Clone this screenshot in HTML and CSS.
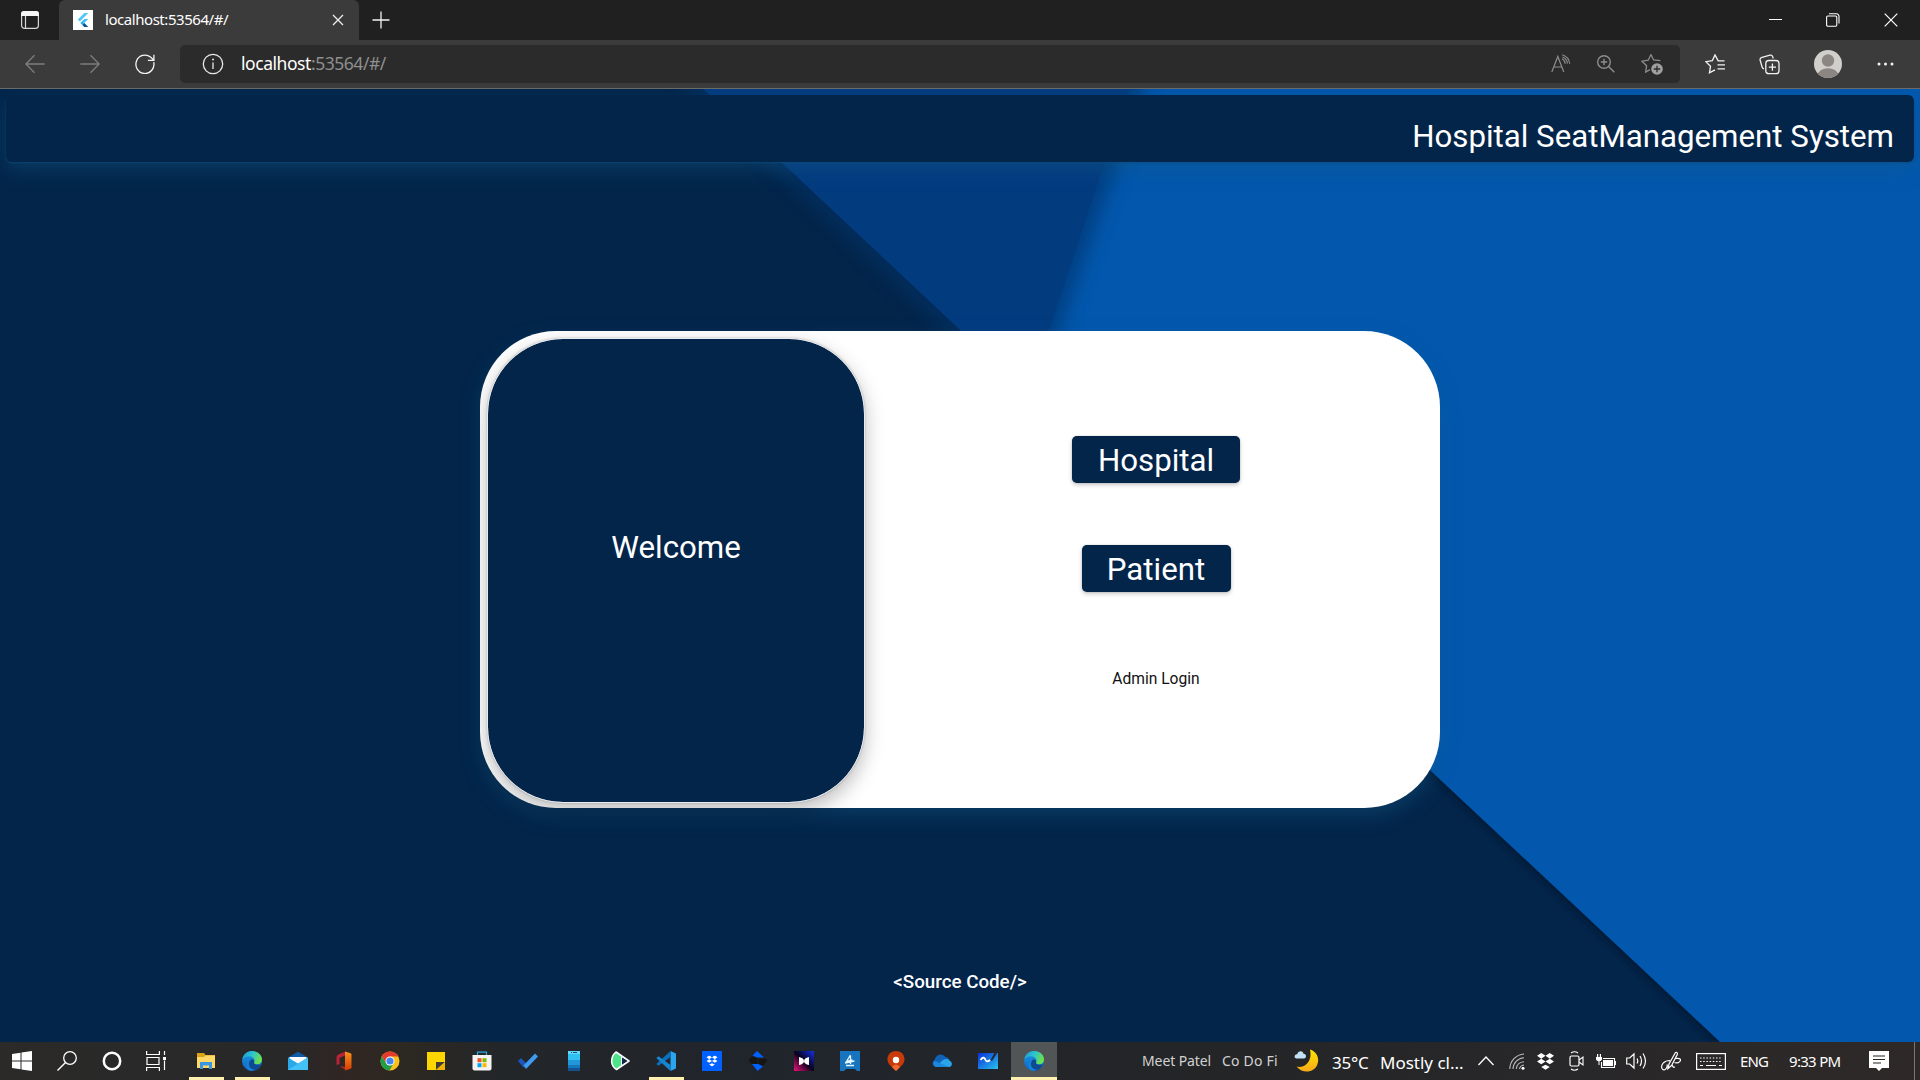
FILE: index.html
```
<!DOCTYPE html>
<html lang="en">
<head>
<meta charset="utf-8">
<title>localhost:53564/#/</title>
<link rel="stylesheet" href="styles.css">
</head>
<body>
<div class="tabstrip">
  <svg class="tab-menu" width="20" height="20" viewBox="0 0 20 20"><rect x="1.6" y="1.6" width="16.8" height="16.8" rx="2.8" fill="none" stroke="#d8d8d8" stroke-width="1.2"/><path d="M1 6V4a3 3 0 0 1 3-3h12a3 3 0 0 1 3 3v2z" fill="#f6f6f6"/><path d="M5.5 6v12" stroke="#d8d8d8" stroke-width="1.2"/></svg>
  <div class="tab">
    <svg width="20" height="20" viewBox="0 0 20 20"><rect width="20" height="20" fill="#fff"/><path d="M11.3 3h4L6.8 11.5 4.8 9.4z" fill="#54c5f8"/><path d="M11.3 9.1h4L11.2 13l-2-2z" fill="#45bdf5"/><path d="m7.3 13 2-2 2 2-2 2z" fill="#1fb2ee"/><path d="m9.3 15 2-2 4 4h-4z" fill="#01579b"/></svg>
    <span class="tab-title">localhost:53564/#/</span>
    <svg width="12" height="12" viewBox="0 0 12 12"><path d="m1 1 10 10M11 1 1 11" stroke="#eee" stroke-width="1.3"/></svg>
  </div>
  <svg class="new-tab" width="18" height="18" viewBox="0 0 18 18"><path d="M9 .5v17M.5 9h17" stroke="#f2f2f2" stroke-width="1.3"/></svg>
  <div class="window-controls">
    <svg width="13" height="14" viewBox="0 0 13 14"><path d="M0 6.500h13" stroke="#fff"/></svg>
    <svg width="14" height="14" viewBox="0 0 14 14"><rect x=".6" y="3" width="10.2" height="10.2" rx="1.2" fill="none" stroke="#fff" stroke-width="1.1"/><path d="M3 .8h7.5a2.5 2.5 0 0 1 2.5 2.5v7.2" fill="none" stroke="#fff" stroke-width="1.1"/></svg>
    <svg width="14" height="14" viewBox="0 0 14 14"><path d="m.7.7 12.6 12.6M13.3.7.7 13.3" stroke="#fff" stroke-width="1.2"/></svg>
  </div>
</div>

<div class="toolbar">
  <div class="nav">
    <svg width="20" height="20" viewBox="0 0 20 20"><path d="M19.700 10H1M9.500 1.300.9 10l8.600 8.700" fill="none" stroke="#7d7d7d" stroke-width="1.3"/></svg>
    <svg width="20" height="20" viewBox="0 0 20 20"><path d="M.3 10H19M10.500 1.300 19.100 10l-8.600 8.700" fill="none" stroke="#7d7d7d" stroke-width="1.3"/></svg>
    <svg width="20" height="20" viewBox="0 0 20 20"><path d="M18.700 8.200A9 9.200 0 1 1 15.500 3.100L18.600 6M18.900.8V6.400H12.900" fill="none" stroke="#f4f4f4" stroke-width="1.3"/></svg>
  </div>
  <div class="address">
    <svg width="22" height="22" viewBox="0 0 22 22"><circle cx="11" cy="11" r="9.700" fill="none" stroke="#e8e8e8" stroke-width="1.3"/><path d="M11 9.500v6.500" stroke="#e8e8e8" stroke-width="1.300"/><circle cx="11" cy="6.500" r="1" fill="#e8e8e8"/></svg>
    <span class="url"><b>localhost</b>:53564/#/</span>
    <div class="address-tools">
      <svg width="20" height="20" viewBox="0 0 20 20"><path d="M.8 18 6.800 2.500 12.800 18M2.800 13h8M11 4.800c2 1 3 2.600 3.200 5M11.200.8c4 1.200 7 4.500 7.500 9M11.500 3c3 1 4.500 3 5 6.500" fill="none" stroke="#8d8d8d" stroke-width="1.2"/></svg>
      <svg width="20" height="20" viewBox="0 0 20 20"><circle cx="8" cy="8" r="6.300" fill="none" stroke="#8d8d8d" stroke-width="1.400"/><path d="m12.500 12.500 5.800 5.800M8 4.800v6.400M4.800 8h6.400" stroke="#8d8d8d" stroke-width="1.400"/></svg>
      <svg width="22" height="22" viewBox="0 0 22 22"><path d="M10 1.500 12.600 7l6.800.7M9 16.600 4.700 19l.9-6.300L1 8.200l6.200-1L10 1.500" fill="none" stroke="#8d8d8d" stroke-width="1.300"/><circle cx="16" cy="16" r="5.800" fill="#a0a0a0"/><path d="M16 12.800v6.400M12.800 16h6.400" stroke="#2b2b2b" stroke-width="1.300"/></svg>
    </div>
  </div>
  <div class="tools">
    <svg width="20" height="20" viewBox="0 0 20 20"><path d="M19.500 6.900h-6.300L10 .9 7.300 6.700l-6.500 1 4.700 4.600-1 6.500 5.500-2.900M12.500 10.900h7.500M12.500 14.900h7.500" fill="none" stroke="#f2f2f2" stroke-width="1.350"/></svg>
    <svg width="21" height="21" viewBox="0 0 21 21"><rect x="6.800" y="6.500" width="13.200" height="13.200" rx="3" fill="none" stroke="#f2f2f2" stroke-width="1.300"/><path d="M13.400 9.500v7.200M9.800 13.100H17M14.200 4.500 13.700 2.600Q13 .7 11 1.200L3 3.400Q.7 4 1.100 6l2 7Q3.500 14.500 5 14.800" fill="none" stroke="#f2f2f2" stroke-width="1.300"/></svg>
    <svg width="28" height="28" viewBox="0 0 28 28"><clipPath id="face"><circle cx="14" cy="14" r="14"/></clipPath><g clip-path="url(#face)"><rect width="28" height="28" fill="#d1cfcc"/><circle cx="14" cy="10.500" r="6.200" fill="#8c8683"/><ellipse cx="14" cy="25.500" rx="10.300" ry="7.300" fill="#8c8683"/></g></svg>
    <svg width="17" height="4" viewBox="0 0 17 4"><g fill="#f2f2f2"><circle cx="2" cy="2" r="1.500"/><circle cx="8.500" cy="2" r="1.500"/><circle cx="15" cy="2" r="1.500"/></g></svg>
  </div>
</div>

<main class="page">
  <svg class="backdrop" width="1920" height="953" viewBox="0 0 1920 953">
    <defs>
      <filter id="soft" x="-10%" y="-10%" width="120%" height="120%"><feGaussianBlur stdDeviation="10"/></filter>
      <filter id="tight" x="-10%" y="-10%" width="120%" height="120%"><feGaussianBlur stdDeviation="3"/></filter>
      <clipPath id="navy"><path d="M0 0H703L1720 953H0z"/></clipPath>
    </defs>
    <rect width="1920" height="953" fill="#0358ae"/>
    <path d="M680-20H1150L1024 343 984 460z" fill="#033570" opacity=".72" filter="url(#soft)"/>
    <path d="M682-20H1136L970 477z" fill="#033b7f"/>
    <path d="M0 0H703L1720 953H0z" fill="#03254a"/>
    <g clip-path="url(#navy)">
      <path d="M682-20 990 269" stroke="#053c7c" stroke-width="12" opacity=".7" filter="url(#soft)"/>
      <path d="M1400 653 1741 973" stroke="#021429" stroke-width="6" opacity=".7" filter="url(#tight)"/>
    </g>
  </svg>
  <header class="banner">Hospital SeatManagement System</header>
  <section class="card">
    <div class="welcome">Welcome</div>
    <div class="choices">
      <button class="btn hospital">Hospital</button>
      <button class="btn patient">Patient</button>
      <a class="admin">Admin Login</a>
    </div>
  </section>
  <footer class="source">&lt;Source Code/&gt;</footer>
</main>

<div class="taskbar">
  <svg width="0" height="0" class="defs">
    <defs>
      <linearGradient id="eg" x1="0" y1="0" x2="1" y2=".4"><stop offset="0" stop-color="#1793d1"/><stop offset=".5" stop-color="#2bc3d2"/><stop offset="1" stop-color="#6be052"/></linearGradient>
      <linearGradient id="eb" x1="0" y1="0" x2="0" y2="1"><stop offset="0" stop-color="#1b9de2"/><stop offset="1" stop-color="#1160c4"/></linearGradient>
      <linearGradient id="of" x1="0" y1="0" x2="0" y2="1"><stop offset="0" stop-color="#f7941d"/><stop offset="1" stop-color="#d83b01"/></linearGradient>
      <linearGradient id="pk" x1="0" y1="1" x2="1" y2="0"><stop offset="0" stop-color="#f0127c"/><stop offset=".5" stop-color="#08021c"/><stop offset="1" stop-color="#1330e8"/></linearGradient>
      <linearGradient id="wb" x1="0" y1="0" x2="1" y2="1"><stop offset="0" stop-color="#0a2fd8"/><stop offset="1" stop-color="#28c4f0"/></linearGradient>
      <linearGradient id="mn" x1="0" y1="0" x2="0" y2="1"><stop offset="0" stop-color="#ffe600"/><stop offset="1" stop-color="#f8a918"/></linearGradient>
      <symbol id="edge" viewBox="0 0 20 20"><circle cx="10" cy="10" r="10" fill="url(#eb)"/><path d="M.3 8.500C1.200 3.500 5 0 10 0c6 0 10 4 10 8.400 0 3.200-2.400 4.800-5 4.800-2 0-3.300-.8-3-1.800.5-1 .7-1.600.5-2.500C12 6.800 9.800 5.300 7 5.300 4 5.300 1.500 6.600.3 8.500z" fill="url(#eg)"/><path d="M12 11.400c-.3 1.200 1.500 2.400 3.600 2.400 1.400 0 2.600-.4 3.500-.9C17.500 17 14 19.500 10.500 19.900 7 19 5.200 16.500 5.500 13.500c.2-2.600 2-4.500 4.200-5.300 2 .3 3 1.800 2.300 3.200z" fill="#0d4a92"/><path d="M7 14c.5 3 3.200 4.800 6.300 4.500-2 1.300-3.500 1.500-5.300 1.200-3-.8-4.500-4-3.500-7.200.8-2.600 3-4.300 5.200-4.300-2 1.300-3.100 3.300-2.700 5.800z" fill="#1580d6"/></symbol>
      <symbol id="box" viewBox="0 0 20 18"><path d="m5.500 0 4.500 3-4.500 3L1 3zM14.500 0 19 3l-4.500 3L10 3zM5.500 6l4.500 3-4.500 3L1 9zM14.500 6 19 9l-4.500 3L10 9zM10 12.500l4.500 2.300-4.500 3-4.500-3z" fill="#fff"/></symbol>
    </defs>
  </svg>
  <div class="system-apps">
    <div><svg width="20" height="20" viewBox="0 0 20 20"><path d="M0 3l8.500-1.300v7.800H0zM9.500 1.500 20 0v9.500H9.500zM0 10.500h8.500v7.800L0 17zM9.500 10.500H20V20L9.500 18.500z" fill="#fff"/></svg></div>
    <div><svg width="20" height="20" viewBox="0 0 20 20"><circle cx="13" cy="7" r="6.300" fill="none" stroke="#fff" stroke-width="1.300"/><path d="M8.500 11.500.5 19.500" stroke="#fff" stroke-width="1.400"/></svg></div>
    <div><svg width="20" height="20" viewBox="0 0 20 20"><circle cx="10" cy="10" r="8.200" fill="none" stroke="#fff" stroke-width="2.500"/></svg></div>
    <div><svg width="21" height="20" viewBox="0 0 21 20"><path d="M.6 0v3.500h12.800V0M.6 20v-3.500h12.800V20M1 6.500h12v7H1zM18.500 0v4M18.500 9.500V19" fill="none" stroke="#fff" stroke-width="1.200"/><rect x="17" y="6" width="3" height="3" fill="#fff"/></svg></div>
  </div>
  <div class="apps">
    <div class="open"><svg width="20" height="20" viewBox="0 0 20 20"><path d="M1 2h7l1.500 2H19v13H1z" fill="#dda316"/><path d="M1 6h7l1.500-1.500H19V17H1z" fill="#ffd868"/><path d="M4 18v-7h12v7h-3v-3.500H7V18z" fill="#3797e2"/></svg></div>
    <div class="open"><svg width="20" height="20"><use href="#edge"/></svg></div>
    <div><svg width="20" height="20" viewBox="0 0 20 20"><path d="M0 6.500 10 .8l10 5.700v5H0z" fill="#0f5ca8"/><path d="M1.500 6h17v8h-17z" fill="#fff"/><path d="m0 6.500 10 6 10-6V19H0z" fill="#2aa8ea"/><path d="M0 19 20 6.500V19z" fill="#45c2f5"/></svg></div>
    <div><svg width="20" height="20" viewBox="0 0 20 20"><path d="M12 .5 6 2.800Q2.500 4 2.500 6.500V14l3-1V7l6.500-3zM5.500 15.200 12 19V16z" fill="#b72339"/><path d="m11 .5 5.500 1.700q1 .4 1 1.500v12.600q0 1.100-1 1.500L11 19.500z" fill="url(#of)"/></svg></div>
    <div><svg width="20" height="20" viewBox="0 0 20 20"><circle cx="10" cy="10" r="9.500" fill="#fbc116"/><path d="M1.800 5.200A9.500 9.500 0 0 1 18.300 5.500H10l-4 6.500z" fill="#e33b2e"/><path d="M1.800 5.200A9.500 9.500 0 0 0 9.400 19.500L14 12 10 14.500 5.900 12z" fill="#229e4b"/><circle cx="10" cy="10" r="4.500" fill="#fff"/><circle cx="10" cy="10" r="3.600" fill="#4285f4"/></svg></div>
    <div><svg width="20" height="20" viewBox="0 0 20 20"><path d="M1 1h18v18H1z" fill="#fdd600"/><path d="M10 11h9l-9 8z" fill="#3d3b38"/><path d="M19 11v8h-9z" fill="#f0b400"/></svg></div>
    <div><svg width="20" height="20" viewBox="0 0 20 20"><path d="M5.500 5V1.200h9V5" fill="none" stroke="#2aaae2" stroke-width="1.200"/><path d="M.5 4h19v13.500q0 2-2 2h-15q-2 0-2-2z" fill="#f4f4f4"/><path d="M5.500 7.200h4v4h-4z" fill="#f25022"/><path d="M10.500 7.200h4v4h-4z" fill="#7fba00"/><path d="M5.500 12.200h4v4h-4z" fill="#00a4ef"/><path d="M10.500 12.200h4v4h-4z" fill="#ffb900"/></svg></div>
    <div><svg width="20" height="20" viewBox="0 0 20 20"><path d="m0 10 3-3 6 6-3.500 3.500z" fill="#1b57bb"/><path d="m5.500 14.500 11.500-12 3 3L8 18z" fill="#3f9bf0"/></svg></div>
    <div><svg width="12" height="20" viewBox="0 0 12 20"><path fill="#2fc1f1" d="M0 0h12v20H0z"/><path fill="#63d9f8" d="M0 0h12v3H0z"/><path fill="#2196d8" d="M0 9h12v5H0z"/><path fill="#1478bd" d="M0 14h12v3H0z"/><path fill="#135290" d="M0 17h12v3H0z"/><path d="M3 1.500h1M5 1.500h4" stroke="#135290"/></svg></div>
    <div><svg width="20" height="20" viewBox="0 0 20 20"><path d="M6 1 19 10 6.500 18.500C.3 15 0 6 6 1z" fill="#4de388" stroke="#fff" stroke-width="1.600" stroke-linejoin="round"/><path d="m11.500 5.500 7 4.500-7 4.500z" fill="#11264b" stroke="#fff"/></svg></div>
    <div class="open"><svg width="20" height="20" viewBox="0 0 20 20"><path d="M14.500 0 20 2.500v15L14.500 20z" fill="#2aa6f0"/><path d="M14.500 0v6L2.500 14.800.3 13z" fill="#0b70bd"/><path d="M14.500 20v-6L2.500 5.200.3 7z" fill="#1786d2"/></svg></div>
    <div><svg width="20" height="20" viewBox="0 0 20 20"><path fill="#0061fe" d="M0 0h20v20H0z"/><use href="#box" x="3.800" y="4.500" width="12.400" height="11"/></svg></div>
    <div><svg width="20" height="20" viewBox="0 0 20 20"><path d="M9 0 16 6.500H9L4.500 4.500zM4 13h7l4 2.500-5.500 4.500z" fill="#0061fe"/><path d="M4 5.500 9.500 7v6H4L.5 9.500zM10.500 7.500h6l3 1.500-4.500 6-4.500-2z" fill="#151516"/></svg></div>
    <div><svg width="20" height="20" viewBox="0 0 20 20"><path fill="url(#pk)" d="M0 0h20v20H0z"/><path d="M5 6q5 1 5 4t-5 4zM15 6q-5 1-5 4t5 4z" fill="#fff"/></svg></div>
    <div><svg width="20" height="20" viewBox="0 0 20 20"><path d="M0 0h20v20h-3l-2-2H6l-2 2H0z" fill="#1774bf"/><path d="m10.500 4-4 6.500 6-1.500M5 12l9.500-2M6 14.500h8M10.500 5v8" fill="none" stroke="#e8f6ff" stroke-width="1.300"/></svg></div>
    <div><svg width="20" height="20" viewBox="0 0 20 20"><path d="M10 0C4.500 0 1.500 4 1.500 8.500c0 4.500 4 7 8.500 11.500 4.500-4.500 8.500-7 8.500-11.500C18.500 4 15.500 0 10 0z" fill="#c93a0b"/><path d="M6 16q4-5 8 0l-4 4z" fill="#ed6b35"/><circle cx="10" cy="9" r="3.200" fill="#fff"/></svg></div>
    <div><svg width="20" height="20" viewBox="0 0 20 20"><path d="M4 16C.5 15.500-.8 11 2.500 9 4 3 10 1.500 13.500 6c1.500 0 3 .8 4 3z" fill="#0f62b5"/><path d="M3.500 16 11 9q4-2 6.500.500C21 11 20.500 16 17 16z" fill="#2aa5ea"/><path d="M3 15.500Q0 13 2.500 9.800L17 16H4z" fill="#1c88dc"/></svg></div>
    <div><svg width="20" height="20" viewBox="0 0 20 20"><path d="M0 2h20v16H0z" fill="url(#wb)"/><path d="M2.500 9q3-4 4.500-1 1.500 4 5 1" fill="none" stroke="#fff" stroke-width="1.800"/><path d="m12.500 9 5-9 2 1.500L14 10z" fill="#26282d"/></svg></div>
    <div class="active"><svg width="20" height="20"><use href="#edge"/></svg></div>
  </div>
  <div class="tray">
    <span class="small meet">Meet Patel</span>
    <span class="small codo">Co Do Fi</span>
    <svg width="25" height="24" viewBox="0 0 25 24"><path d="M16 .5C23 3 25.500 9 23.500 15 21 23 9.500 26 2.500 17.500 9 19.500 19 14 16 .5z" fill="url(#mn)"/><path d="M2.500 9.500C-.5 9 .3 5 3.200 5.200 4 1.500 9 1.300 9.500 4.800 13 5 12.500 9.500 10 9.500z" fill="#bfe2f6"/></svg>
    <span class="weather temp">35°C</span>
    <span class="weather sky">Mostly cl...</span>
    <svg width="16" height="10" viewBox="0 0 16 10"><path d="m.5 9 7.500-8 7.500 8" fill="none" stroke="#fff" stroke-width="1.300"/></svg>
    <svg width="16" height="17" viewBox="0 0 16 17"><path d="M.8 16C1 8 7 1.500 15 1M4 16C4.200 10 9 5 15 4.700M7.300 16C7.500 12 10.500 9 15 8.700M10.500 16q.5-3.500 4.500-4" fill="none" stroke="#bbb" stroke-width="1.100"/><circle cx="14" cy="15.300" r="1.500" fill="#fff"/></svg>
    <svg width="19" height="17"><use href="#box"/></svg>
    <svg width="15" height="20" viewBox="0 0 15 20"><rect x="1" y="5" width="9" height="10" rx="1.500" fill="none" stroke="#fff" stroke-width="1.200"/><path d="m10 9 4-3v8l-4-3M2 2q3.500-2.500 7 0M2 18q3.500 2.500 7 0" fill="none" stroke="#fff" stroke-width="1.100"/></svg>
    <svg width="20" height="15" viewBox="0 0 20 15"><path d="M7 4.500h11.500v9h-13V8M19.500 7v4" fill="none" stroke="#fff" stroke-width="1.100"/><path d="M7 6h10v6H7zM0 3h6v2.500Q5.500 7 3 7.500.5 7 0 5.500zM1 0h1.200v3H1zM3.800 0H5v3H3.800zM2.500 7h1v4h-1z" fill="#fff"/></svg>
    <svg width="21" height="18" viewBox="0 0 21 18"><path d="M.7 6h3L8 2v14l-4.300-4h-3zM11 6.500q1.500 2.500 0 5M14 4q3 5 0 10M17 1.500q5 7.500 0 15" fill="none" stroke="#fff" stroke-width="1.200"/></svg>
    <svg width="20" height="20" viewBox="0 0 20 20"><path d="M7 17.500 8 13 14.500 1.500q2-.5 2 1.500L10.500 14.500zM9 9.500C3 9.500-.5 14 1 17.500c2 3.500 6-.5 5-4M14.500 7.500q5-.5 5 1.500c0 2.500-4 3.500-6 2.500M11 13q.5 4 3 3" fill="none" stroke="#fff" stroke-width="1.200"/></svg>
    <svg width="30" height="17" viewBox="0 0 30 17"><rect x=".6" y=".6" width="28.800" height="15.800" fill="none" stroke="#fff" stroke-width="1.200"/><path d="M4 5h22M4 8.500h22" stroke="#fff" stroke-dasharray="1.500 1.700"/><path d="M4 12.500h3M10 12.500h10M23 12.500h3" stroke="#fff"/></svg>
    <span class="clock eng">ENG</span>
    <span class="clock time">9:33 PM</span>
    <svg class="note" width="20" height="20" viewBox="0 0 20 20"><path d="M0 0h20v17h-7l-3 3-3-3H0z" fill="#fff"/><path d="M4 5h12M4 8.500h12M4 12h8" stroke="#282522" stroke-width="1.100"/></svg>
    <i class="peek"></i>
  </div>
</div>
</body>
</html>
```
FILE: styles.css
```
* { box-sizing: border-box; }
body {
  margin: 0;
  width: 1920px;
  height: 1080px;
  overflow: hidden;
  display: flex;
  flex-direction: column;
  background: #03254a;
  font-family: Roboto, sans-serif;
}
svg { display: block; flex: none; }

.tabstrip {
  flex: none;
  height: 40px;
  display: flex;
  align-items: center;
  background: #202020;
}
.tab-menu { margin-left: 20px; }
.tab {
  width: 300px;
  height: 40px;
  margin-left: 19px;
  padding: 0 15px 0 14px;
  display: flex;
  align-items: center;
  background: #3b3b3b;
  border-radius: 6px 6px 0 0;
}
.tab-title {
  flex: 1;
  margin-left: 12px;
  padding-bottom: 2px;
  font: 15px "Noto Sans", sans-serif;
  letter-spacing: -.45px;
  color: #fff;
}
.new-tab { margin-left: 13px; }
.window-controls {
  margin-left: auto;
  padding-right: 22px;
  display: flex;
  gap: 44px;
}

.toolbar {
  flex: none;
  height: 49px;
  display: flex;
  align-items: center;
  background: #3b3b3b;
  border-bottom: 1px solid #6b6b6b;
}
.nav {
  width: 180px;
  padding-left: 25px;
  display: flex;
  gap: 35px;
}
.address {
  width: 1500px;
  height: 38px;
  padding: 0 17px 0 22px;
  display: flex;
  align-items: center;
  background: #2b2b2b;
  border-radius: 5px;
}
.url {
  margin-left: 17px;
  padding-bottom: 2px;
  font: 17.5px "Noto Sans", sans-serif;
  letter-spacing: -.45px;
  color: #8f8f8f;
}
.url b { font-weight: 400; color: #fff; }
.address-tools {
  margin-left: auto;
  display: flex;
  align-items: center;
  gap: 25px;
}
.tools {
  display: grid;
  grid-template-columns: 54px 55px 63px 43px;
  align-items: center;
  padding-left: 25px;
}

.page {
  flex: none;
  position: relative;
  height: 953px;
  overflow: hidden;
  display: flex;
  flex-direction: column;
  align-items: center;
}
.backdrop { position: absolute; inset: 0; }
.banner, .card, .source { position: relative; }
.banner {
  width: 1908px;
  height: 67px;
  margin-top: 6px;
  padding: 15px 20px 0 0;
  text-align: right;
  font-size: 31.25px;
  line-height: 54px;
  color: #fff;
  background: #03254a;
  border-radius: 6px;
  box-shadow: 0 8px 20px rgba(20, 88, 134, .42), 0 1px 2px rgba(13, 70, 120, .7);
}
.card {
  width: 960px;
  height: 477px;
  margin-top: 169px;
  padding: 7px 6px 5px 7px;
  display: flex;
  background: #fff;
  border-radius: 76px;
  box-shadow: 0 8px 20px rgba(20, 88, 134, .42);
}
.welcome {
  width: 378px;
  height: 465px;
  display: flex;
  align-items: center;
  justify-content: center;
  padding-bottom: 47px;
  font-size: 31.25px;
  color: #fff;
  background: #03254a;
  background-clip: padding-box;
  border: 1px solid #e8ebef;
  border-radius: 76px;
  box-shadow: 0 8px 20px rgba(0, 0, 0, .26), 0 0 2px rgba(0, 0, 0, .25);
}
.choices {
  flex: 1;
  display: flex;
  flex-direction: column;
  align-items: center;
  padding: 98px 0 0 13px;
}
.btn {
  height: 47px;
  padding: 0;
  border: 0;
  border-radius: 5px;
  background: #03254a;
  box-shadow: 0 2px 4px rgba(0, 0, 0, .22), 0 0 1px rgba(0, 0, 0, .4);
  color: #fff;
  font: 31.25px/49px Roboto, sans-serif;
}
.hospital { width: 168px; }
.patient { width: 149px; margin-top: 62px; }
.admin {
  margin-top: 77px;
  font-size: 15.6px;
  line-height: 20px;
  color: #111;
}
.source {
  margin-top: 163px;
  font-size: 18.75px;
  font-weight: 500;
  line-height: 22px;
  color: #fff;
}

.taskbar {
  flex: none;
  height: 38px;
  display: flex;
  background: linear-gradient(90deg, #2b2a29, #282829 15%, #302623 18%, #2d2822 21%, #232629 26%, #20252c 40%, #242527 62%, #27272a 78%, #2e2927);
}
.defs { position: absolute; }
.system-apps { width: 183px; padding-right: 4px; display: flex; }
.system-apps div { width: 45px; flex: none; }
.system-apps div:first-child { width: 44px; }
.system-apps div, .apps div {
  display: flex;
  align-items: center;
  justify-content: center;
}
.apps { display: flex; width: 874px; }
.apps div { width: 46px; }
.open {
  background: linear-gradient(#fff0b0, #fff0b0) center bottom / 35px 3px no-repeat;
}
.active {
  background: linear-gradient(#fff0b0, #fff0b0) center bottom / 100% 3px no-repeat, #525555;
}
.tray {
  margin-left: 85px;
  display: grid;
  grid-template-columns: 80px 72px 38px 48px 98px 31px 27px 33px 27px 30px 35px 35px 44px 49px 80px 45px 6px;
  align-items: center;
  font-family: "Noto Sans", sans-serif;
  color: #fff;
  white-space: nowrap;
}
.small { font-size: 14px; padding-bottom: 2px; color: #d2d2d2; }
.meet { letter-spacing: -.1px; }
.codo { letter-spacing: .2px; }
.weather { font-size: 17px; padding-top: 3px; }
.temp { letter-spacing: -.2px; }
.sky { letter-spacing: 0; }
.clock { font-size: 15px; }
.eng { letter-spacing: -.9px; }
.time { letter-spacing: -.7px; }
.peek { width: 1px; height: 38px; background: #777; }
```
